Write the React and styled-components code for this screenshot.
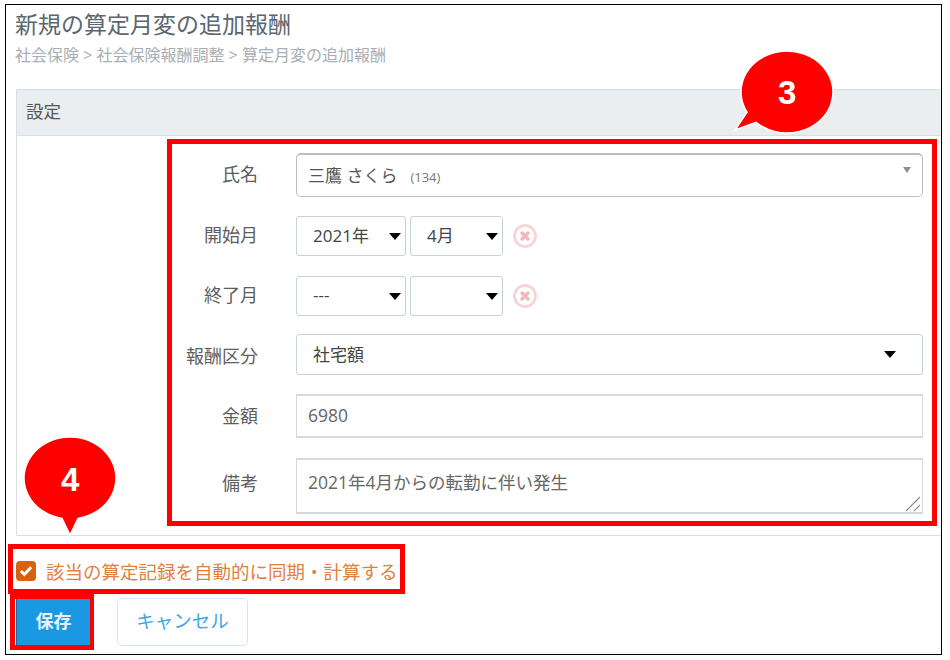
import React from 'react';
import styled, { createGlobalStyle } from 'styled-components';

const GlobalStyle = createGlobalStyle`
  body {
    margin: 0;
    background: #fff;
    font-family: "Open Sans", "Noto Sans CJK JP", sans-serif;
  }
`;

function Callout({ x, y, width, height, path, digit, digitX, digitY }) {
  return (
    <Bubble style={{ left: x, top: y, width, height }}>
      <svg width={width} height={height}>
        <path d={path} fill="#ff0000" stroke="#fff" strokeWidth="1.5" />
      </svg>
      <Digit style={{ left: digitX, top: digitY }}>{digit}</Digit>
    </Bubble>
  );
}

function ClearIcon() {
  return (
    <ClearWrap>
      <svg width="26" height="26" viewBox="0 0 26 26">
        <circle cx="13" cy="13" r="10.5" fill="none" stroke="#f5d6d6" strokeWidth="2.8" />
        <path d="M10 10 L16 16 M16 10 L10 16" stroke="#efb9b9" strokeWidth="3.4" strokeLinecap="round" />
      </svg>
    </ClearWrap>
  );
}

function App() {
  return (
    <>
      <GlobalStyle />
      <Frame>
        <Title>新規の算定月変の追加報酬</Title>
        <Breadcrumb>社会保険 &gt; 社会保険報酬調整 &gt; 算定月変の追加報酬</Breadcrumb>
        <Panel>
          <PanelHeader>設定</PanelHeader>
          <PanelBody>
            <FormBox>
              <Row $h={45}>
                <Label $h={40}>氏名</Label>
                <NameSelect>
                  <span>
                    三鷹 さくら<EmpNo>(134)</EmpNo>
                  </span>
                  <Caret $small />
                </NameSelect>
              </Row>
              <Row $h={42}>
                <Label $h={35}>開始月</Label>
                <DateGroup>
                  <DateSelect $w={110}>
                    2021年
                    <Caret />
                  </DateSelect>
                  <DateSelect $w={93}>
                    4月
                    <Caret />
                  </DateSelect>
                  <ClearIcon />
                </DateGroup>
              </Row>
              <Row $h={40}>
                <Label $h={36}>終了月</Label>
                <DateGroup>
                  <DateSelect $w={110}>
                    ---
                    <Caret />
                  </DateSelect>
                  <DateSelect $w={93}>
                    <span />
                    <Caret />
                  </DateSelect>
                  <ClearIcon />
                </DateGroup>
              </Row>
              <Row $h={42}>
                <Label $h={41}>報酬区分</Label>
                <WideSelect>
                  社宅額
                  <Caret />
                </WideSelect>
              </Row>
              <Row $h={46}>
                <Label $h={41}>金額</Label>
                <TextInput readOnly value="6980" />
              </Row>
              <Row $h={56}>
                <Label $h={48}>備考</Label>
                <TextAreaWrap>
                  <TextArea readOnly value="2021年4月からの転勤に伴い発生" />
                  <ResizeGrip width="16" height="16" viewBox="0 0 16 16">
                    <path d="M1 15 L15 1 M9 15 L15 9" stroke="#8f8f8f" strokeWidth="1.2" fill="none" />
                  </ResizeGrip>
                </TextAreaWrap>
              </Row>
            </FormBox>
          </PanelBody>
        </Panel>

        <CheckBox>
          <CheckMark>
            <svg width="14" height="12" viewBox="0 0 14 12">
              <path d="M1.8 6 L5.4 9.4 L12.2 2.2" fill="none" stroke="#fff" strokeWidth="3" />
            </svg>
          </CheckMark>
          該当の算定記録を自動的に同期・計算する
        </CheckBox>

        <Actions>
          <SaveMarker>
            <SaveButton>保存</SaveButton>
          </SaveMarker>
          <CancelButton>キャンセル</CancelButton>
        </Actions>

        <Callout
          x={724}
          y={42}
          width={110}
          height={96}
          path="M17 65.25 A46 41 0 1 1 26 75.3 L5 83 Z"
          digit="3"
          digitX={48}
          digitY={27}
        />
        <Callout
          x={14}
          y={428}
          width={100}
          height={108}
          path="M58 85.4 A46 41 0 1 0 42 85.4 L50 102 Z"
          digit="4"
          digitX={41}
          digitY={28}
        />
      </Frame>
    </>
  );
}

export default App;

const Frame = styled.div`
  position: relative;
  box-sizing: border-box;
  width: 937px;
  height: 651px;
  margin: 4px 0 0 5px;
  border: 1px solid #000;
  background: #fff;
`;

const Title = styled.h1`
  margin: 0;
  padding: 4px 0 0 9px;
  height: 35px;
  box-sizing: border-box;
  font-size: 23px;
  line-height: 30px;
  font-weight: 400;
  color: #5b666f;
`;

const Breadcrumb = styled.div`
  padding-left: 9px;
  height: 49px;
  font-size: 16px;
  line-height: 30px;
  color: #a9aeb2;
`;

const Panel = styled.section`
  box-sizing: border-box;
  height: 447px;
  margin-left: 10px;
  border: 1px solid #dcdfe1;
  border-right-width: 0;
`;

const PanelHeader = styled.header`
  box-sizing: border-box;
  height: 46px;
  padding-left: 9px;
  background: #ebeef0;
  border-bottom: 1px solid #dcdfe1;
  font-size: 17.5px;
  line-height: 42px;
  color: #555;
`;

const PanelBody = styled.div`
  padding: 3px 4px 0 150px;
`;

const FormBox = styled.div`
  box-sizing: border-box;
  height: 387px;
  padding: 9px 9px 0 0;
  border: 5px solid #ff0000;
  display: flex;
  flex-direction: column;
  gap: 18px;
`;

const Row = styled.div`
  display: flex;
  align-items: flex-start;
  gap: 38px;
  height: ${(p) => p.$h}px;
  flex: none;
`;

const Label = styled.label`
  flex: none;
  width: 86px;
  height: ${(p) => p.$h}px;
  display: flex;
  align-items: center;
  justify-content: flex-end;
  font-size: 18px;
  color: #5e5e5e;
`;

const NameSelect = styled.div`
  flex: 1;
  box-sizing: border-box;
  height: 44px;
  padding: 0 11px 2px;
  display: flex;
  align-items: center;
  justify-content: space-between;
  border: 1px solid #bdbdbd;
  border-top-width: 2px;
  border-radius: 5px;
  font-size: 17px;
  color: #555;
`;

const EmpNo = styled.span`
  margin-left: 13px;
  font-size: 13px;
  color: #777;
`;

const DateGroup = styled.div`
  display: flex;
  align-items: center;
  gap: 4px;
`;

const DateSelect = styled.div`
  box-sizing: border-box;
  width: ${(p) => p.$w}px;
  height: 40px;
  padding: 0 4px 3px 16px;
  display: flex;
  align-items: center;
  justify-content: space-between;
  border: 1px solid #c6d1d9;
  border-radius: 3px;
  font-size: 17px;
  color: #444;
`;

const WideSelect = styled(DateSelect)`
  flex: 1;
  width: auto;
  height: 41px;
  padding-right: 26px;
`;

const Caret = styled.i`
  flex: none;
  width: 0;
  height: 0;
  border-style: solid;
  border-color: ${(p) => (p.$small ? '#8c8c8c' : '#000')} transparent transparent;
  border-width: ${(p) => (p.$small ? '6px 4px 0' : '7px 6.5px 0')};
  align-self: ${(p) => (p.$small ? 'flex-start' : 'center')};
  margin-top: ${(p) => (p.$small ? '12px' : '3px')};
`;

const ClearWrap = styled.span`
  display: flex;
  margin-left: 5px;
`;

const fieldStyles = `
  box-sizing: border-box;
  border: 2px solid #d3d9de;
  border-width: 2px 1.5px;
  outline: none;
  font-family: "Open Sans", "Noto Sans CJK JP", sans-serif;
  font-size: 17.5px;
  color: #666;
`;

const TextInput = styled.input`
  ${fieldStyles}
  flex: 1;
  min-width: 0;
  height: 44px;
  padding: 0 11px 2px;
`;

const TextAreaWrap = styled.div`
  position: relative;
  flex: 1;
  display: flex;
`;

const TextArea = styled.textarea`
  ${fieldStyles}
  flex: 1;
  height: 56px;
  padding: 10px 11px 0;
  line-height: 24px;
  resize: none;
`;

const ResizeGrip = styled.svg`
  position: absolute;
  right: 2px;
  bottom: 2px;
`;

const CheckBox = styled.div`
  box-sizing: border-box;
  width: 397px;
  height: 50px;
  margin: 8px 0 0 2px;
  padding: 3px 0 0 3px;
  display: flex;
  align-items: center;
  gap: 10px;
  border: 5px solid #ff0000;
  font-size: 18.5px;
  white-space: nowrap;
  color: #e2803f;
`;

const CheckMark = styled.span`
  flex: none;
  width: 20px;
  height: 20px;
  display: flex;
  align-items: center;
  justify-content: center;
  border-radius: 4px;
  background: #d9600f;
`;

const Actions = styled.div`
  display: flex;
  align-items: flex-start;
  gap: 23px;
  margin-left: 4px;
`;

const SaveMarker = styled.div`
  box-sizing: border-box;
  width: 84px;
  height: 56px;
  padding-left: 1px;
  border: 5px solid #ff0000;
`;

const SaveButton = styled.button`
  display: block;
  width: 74px;
  height: 46px;
  padding: 0 0 5px;
  border: none;
  border-left: 1px solid #0f6ea8;
  background: #1a98e2;
  font-family: "Open Sans", "Noto Sans CJK JP", sans-serif;
  font-size: 18px;
  font-weight: 700;
  color: #e4f3fc;
`;

const CancelButton = styled.button`
  box-sizing: border-box;
  width: 131px;
  height: 48px;
  margin-top: 4px;
  padding: 0 0 4px;
  border: 1.5px solid #cde8f8;
  border-radius: 5px;
  background: #fff;
  font-family: "Open Sans", "Noto Sans CJK JP", sans-serif;
  font-size: 18.5px;
  color: #3fa6e6;
`;

const Bubble = styled.div`
  position: absolute;
`;

const Digit = styled.span`
  position: absolute;
  font-family: "Liberation Sans", sans-serif;
  font-size: 33px;
  line-height: 38px;
  font-weight: 700;
  color: #fff;
`;
